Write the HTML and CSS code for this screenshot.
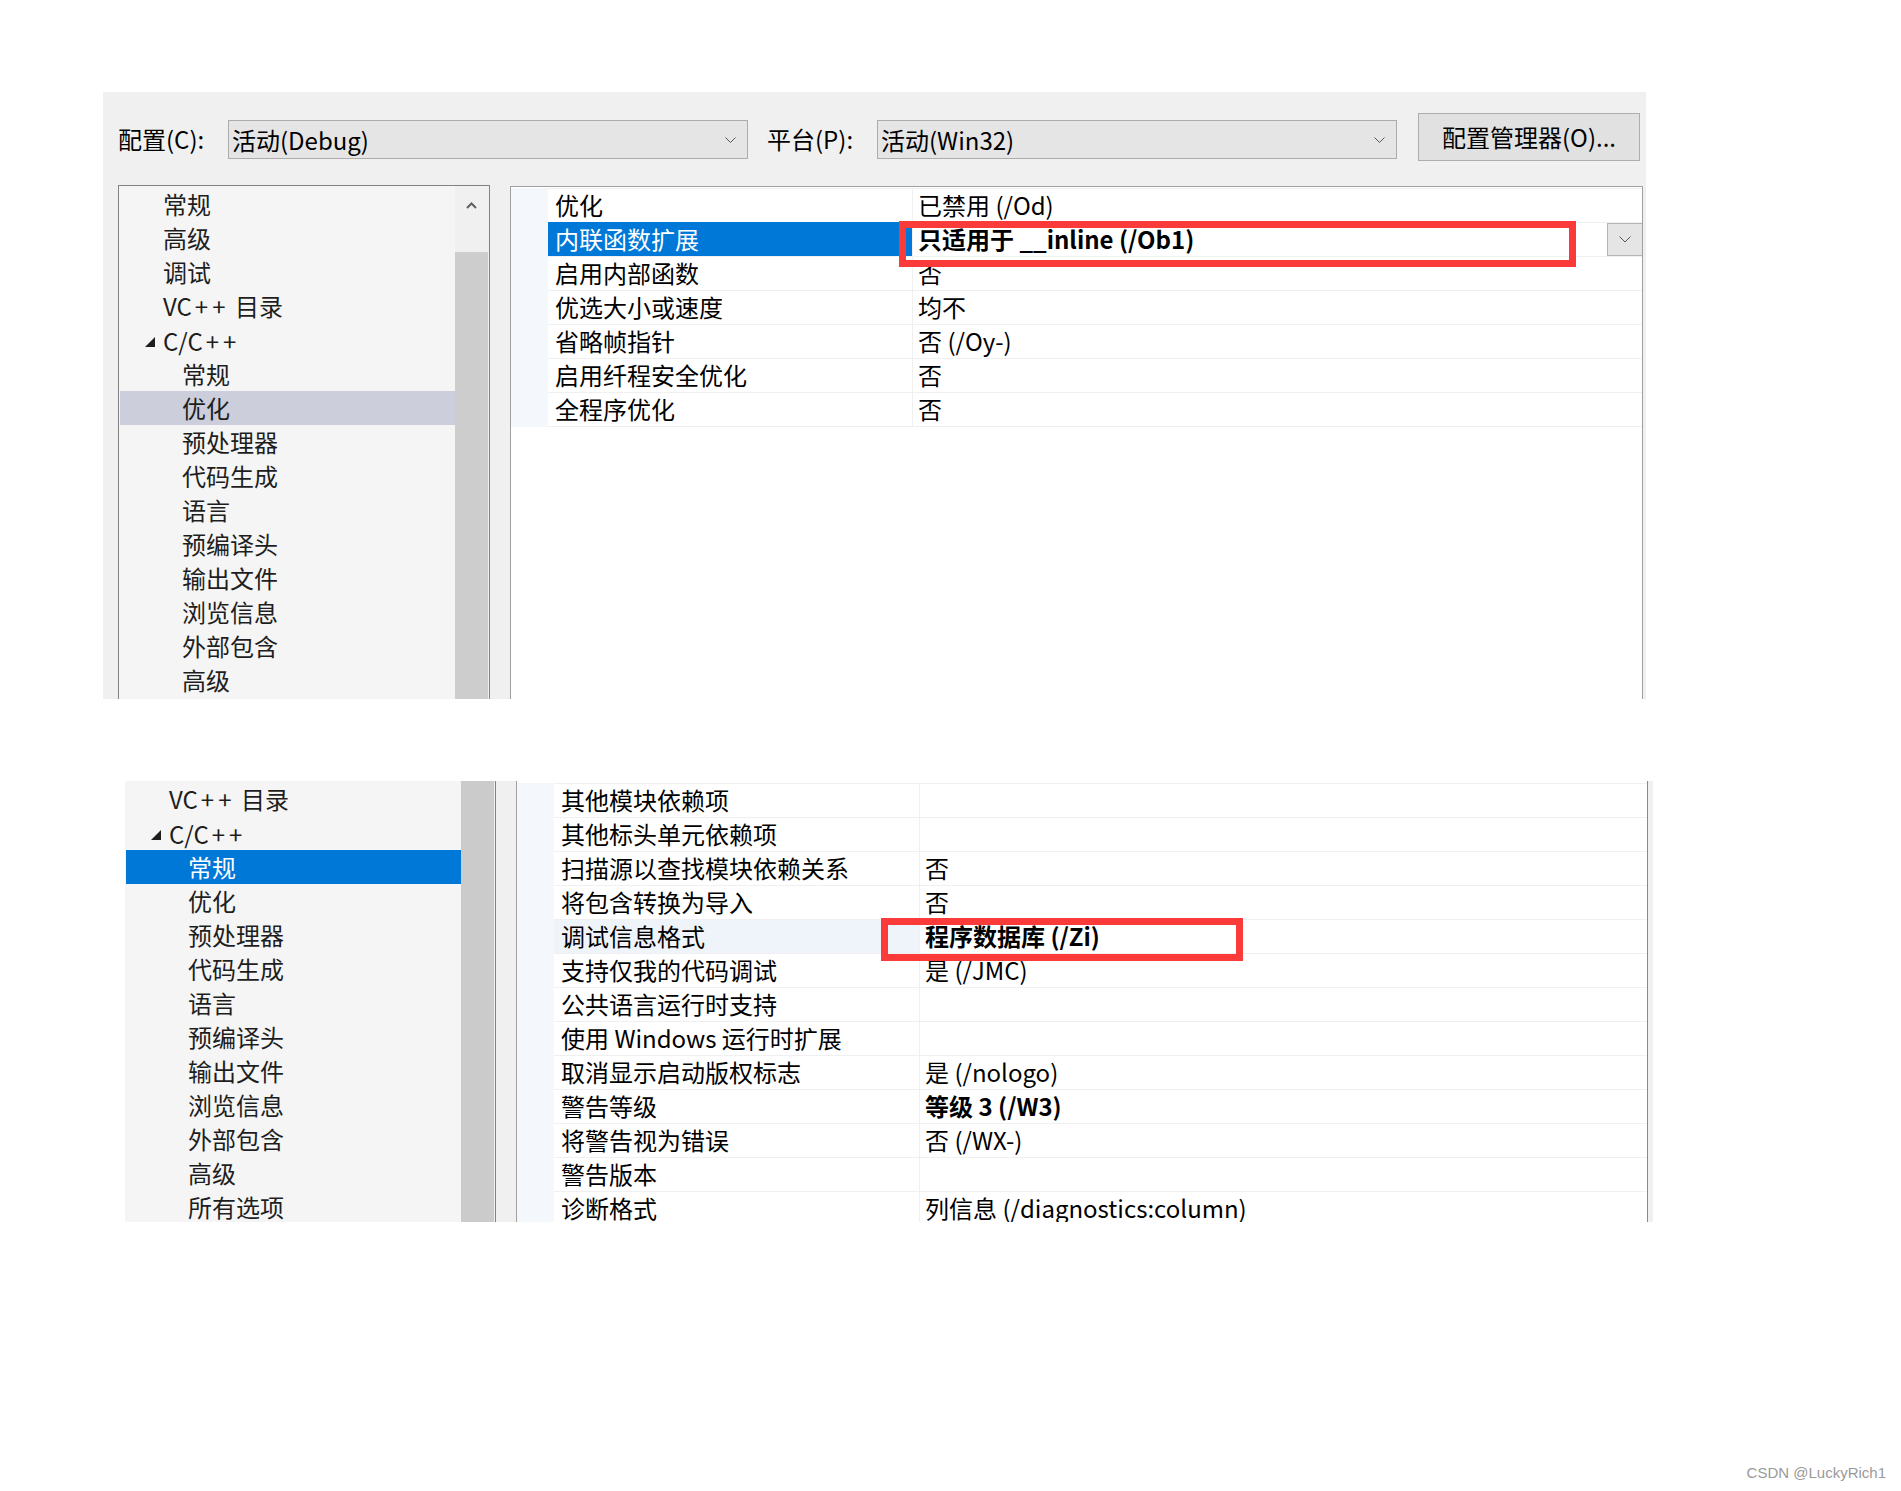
FILE: index.html
```html
<!DOCTYPE html>
<html lang="zh-CN">
<head>
<meta charset="utf-8">
<title>属性页</title>
<link rel="stylesheet" href="styles.css">
</head>
<body>
<div class="page">
  <section class="shot1">
    <div class="toolbar">
      <span class="lbl">配置(C):</span>
      <div class="combo"><span>活动(Debug)</span><svg class="chev" width="11" height="7" viewBox="0 0 11 7"><polyline points="0.5,0.5 5.5,5.5 10.5,0.5" fill="none" stroke="#555" stroke-width="1"/></svg></div>
      <span class="lbl lbl2">平台(P):</span>
      <div class="combo"><span>活动(Win32)</span><svg class="chev" width="11" height="7" viewBox="0 0 11 7"><polyline points="0.5,0.5 5.5,5.5 10.5,0.5" fill="none" stroke="#555" stroke-width="1"/></svg></div>
      <div class="btn">配置管理器(O)...</div>
    </div>
    <div class="main">
      <div class="tree">
        <div class="list">
          <div class="node">常规</div>
          <div class="node">高级</div>
          <div class="node">调试</div>
          <div class="node">VC<span class="pp">++</span> 目录</div>
          <div class="node exp"><svg class="tri" width="10" height="10" viewBox="0 0 10 10"><polygon points="10,0 10,10 0,10" fill="#1e1e1e"/></svg><span>C/C<span class="pp">++</span></span></div>
          <div class="node child">常规</div>
          <div class="node child inactive">优化</div>
          <div class="node child">预处理器</div>
          <div class="node child">代码生成</div>
          <div class="node child">语言</div>
          <div class="node child">预编译头</div>
          <div class="node child">输出文件</div>
          <div class="node child">浏览信息</div>
          <div class="node child">外部包含</div>
          <div class="node child">高级</div>
        </div>
        <div class="vscroll">
          <div class="up"><svg width="11" height="7" viewBox="0 0 11 7"><polyline points="1,6 5.5,1.5 10,6" fill="none" stroke="#606060" stroke-width="2"/></svg></div>
          <div class="thumb"></div>
        </div>
      </div>
      <div class="grid">
        <div class="row"><div class="gut"></div><div class="name">优化</div><div class="val">已禁用 (/Od)</div></div>
        <div class="row"><div class="gut"></div><div class="name active">内联函数扩展</div><div class="val"><b>只适用于 __inline (/Ob1)</b><span class="ddbtn"><svg width="12" height="7" viewBox="0 0 12 7"><polyline points="0.5,0.5 6,6 11.5,0.5" fill="none" stroke="#555" stroke-width="1"/></svg></span></div></div>
        <div class="row"><div class="gut"></div><div class="name">启用内部函数</div><div class="val">否</div></div>
        <div class="row"><div class="gut"></div><div class="name">优选大小或速度</div><div class="val">均不</div></div>
        <div class="row"><div class="gut"></div><div class="name">省略帧指针</div><div class="val">否 (/Oy-)</div></div>
        <div class="row"><div class="gut"></div><div class="name">启用纤程安全优化</div><div class="val">否</div></div>
        <div class="row last"><div class="gut"></div><div class="name">全程序优化</div><div class="val">否</div></div>
      </div>
    </div>
  </section>

  <section class="shot2">
    <div class="list list2">
      <div class="node">VC<span class="pp">++</span> 目录</div>
      <div class="node exp"><svg class="tri" width="10" height="10" viewBox="0 0 10 10"><polygon points="10,0 10,10 0,10" fill="#1e1e1e"/></svg><span>C/C<span class="pp">++</span></span></div>
      <div class="node child selected">常规</div>
      <div class="node child">优化</div>
      <div class="node child">预处理器</div>
      <div class="node child">代码生成</div>
      <div class="node child">语言</div>
      <div class="node child">预编译头</div>
      <div class="node child">输出文件</div>
      <div class="node child">浏览信息</div>
      <div class="node child">外部包含</div>
      <div class="node child">高级</div>
      <div class="node child">所有选项</div>
    </div>
    <div class="vscroll2"><div class="thumb2"></div></div>
    <div class="strip"></div>
    <div class="grid2">
      <div class="row r2"><div class="gut"></div><div class="name">其他模块依赖项</div><div class="val"></div></div>
      <div class="row r2"><div class="gut"></div><div class="name">其他标头单元依赖项</div><div class="val"></div></div>
      <div class="row r2"><div class="gut"></div><div class="name">扫描源以查找模块依赖关系</div><div class="val">否</div></div>
      <div class="row r2"><div class="gut"></div><div class="name">将包含转换为导入</div><div class="val">否</div></div>
      <div class="row r2"><div class="gut"></div><div class="name hover">调试信息格式</div><div class="val"><b>程序数据库 (/Zi)</b></div></div>
      <div class="row r2"><div class="gut"></div><div class="name">支持仅我的代码调试</div><div class="val">是 (/JMC)</div></div>
      <div class="row r2"><div class="gut"></div><div class="name">公共语言运行时支持</div><div class="val"></div></div>
      <div class="row r2"><div class="gut"></div><div class="name">使用 Windows 运行时扩展</div><div class="val"></div></div>
      <div class="row r2"><div class="gut"></div><div class="name">取消显示启动版权标志</div><div class="val">是 (/nologo)</div></div>
      <div class="row r2"><div class="gut"></div><div class="name">警告等级</div><div class="val"><b>等级 3 (/W3)</b></div></div>
      <div class="row r2"><div class="gut"></div><div class="name">将警告视为错误</div><div class="val">否 (/WX-)</div></div>
      <div class="row r2"><div class="gut"></div><div class="name">警告版本</div><div class="val"></div></div>
      <div class="row r2"><div class="gut"></div><div class="name">诊断格式</div><div class="val">列信息 (/diagnostics:column)</div></div>
    </div>
    <div class="strip2"></div>
  </section>

  <div class="wm">CSDN @LuckyRich1</div>

  <div class="mark mark1"></div>
  <div class="mark mark2"></div>
</div>
</body>
</html>
```

FILE: styles.css
```css
* { box-sizing: border-box; }
html, body { margin: 0; padding: 0; background: #fff; }
body {
  font-family: "Noto Sans CJK SC", "Noto Sans", sans-serif;
  font-size: 24px;
  color: #000;
}
.page { position: relative; width: 1901px; height: 1491px; overflow: hidden; }

/* ---------- first screenshot ---------- */
.shot1 {
  margin: 92px 0 0 103px;
  width: 1543px;
  height: 607px;
  background: #f0f0f0;
  padding-left: 15px;
  overflow: hidden;
}
.toolbar { display: flex; align-items: flex-start; padding-top: 21px; height: 93px; }
.lbl { width: 110px; height: 39px; margin-top: 7px; line-height: 38px; white-space: nowrap; }
.lbl2 { margin-left: 19px; }
.combo {
  width: 520px; height: 39px; margin-top: 7px;
  background: #e5e5e5; border: 1px solid #acacac;
  display: flex; align-items: center; justify-content: space-between;
  padding: 0 11px 0 3px; line-height: 37px;
}
.chev { display: block; margin-top: 2px; }
.btn {
  margin-left: 21px; width: 222px; height: 48px;
  background: #e1e1e1; border: 1px solid #adadad;
  text-align: center; line-height: 45px; white-space: nowrap;
}
.main { display: flex; align-items: flex-start; height: 514px; }

.tree {
  width: 372px; height: 514px;
  border: 1px solid #828282; border-bottom: 0;
  display: flex; background: #f5f5f5;
}
.list { width: 336px; padding: 1px 0 0 1px; flex: none; }
.node { height: 34px; line-height: 33px; padding-left: 43px; white-space: nowrap; color: #1e1e1e; }
.node.child { padding-left: 62px; }
.node.exp { padding-left: 25px; display: flex; align-items: center; }
.node.exp .tri { margin: 3px 8px 0 0; flex: none; }
.node.inactive { background: #cccedb; }
.node.selected { background: #0078d7; color: #fff; }
.pp { letter-spacing: 4px; margin-left: 3px; }

.vscroll { width: 34px; background: #f0f0f0; padding-right: 1px; display: flex; flex-direction: column; }
.up { height: 66px; display: flex; justify-content: center; padding-top: 16px; flex: none; }
.up svg { display: block; }
.thumb { flex: 1; background: #cdcdcd; }

.grid {
  margin-left: 20px; margin-top: 1px;
  width: 1133px; height: 513px;
  border: 1px solid #a0a0a0; border-bottom: 0;
  background: #fff; padding-top: 1px;
}
.row { display: grid; grid-template-columns: 37px 365px 1fr; height: 34px; }
.gut { background: #f4f7fc; }
.name {
  border-top: 1px solid #f0f0f0; border-right: 1px solid #f0f0f0;
  padding-left: 7px; line-height: 32px; white-space: nowrap;
}
.val {
  border-top: 1px solid #f0f0f0;
  padding-left: 5px; line-height: 32px; white-space: nowrap;
  display: flex; align-items: stretch;
}
.row.last { height: 35px; }
.row.last .name, .row.last .val { border-bottom: 1px solid #f0f0f0; }
.name.active { background: #0078d7; color: #fff; border-top-color: #0078d7; }
.val b { font-weight: 700; }
.ddbtn {
  margin-left: auto; width: 35px; height: 33px;
  background: #e5e5e5; border: 1px solid #b4b4b4; border-right: 0;
  display: flex; align-items: center; justify-content: center;
}
.ddbtn svg { display: block; }

/* ---------- second screenshot ---------- */
.shot2 {
  margin: 82px 0 0 125px;
  width: 1528px; height: 441px;
  display: flex; overflow: hidden;
}
.list2 { background: #f5f5f5; height: 441px; }
.vscroll2 { width: 35px; background: #f0f0f0; border-right: 1px solid #828282; padding-right: 1px; flex: none; }
.thumb2 { height: 100%; background: #cbcbcb; }
.strip { width: 20px; background: #f0f0f0; flex: none; }
.grid2 {
  width: 1132px; height: 441px; flex: none;
  border-left: 1px solid #a0a0a0; border-right: 1px solid #8a8a8a;
  background: #fff; padding-top: 2px;
}
.grid2 .gut { background: #f4f7fc; }
.row.r2 { grid-template-columns: 37px 366px 1fr; }
.name.hover { background: #eff3fa; }
.strip2 { width: 6px; background: #f0f0f0; flex: none; }

/* ---------- watermark ---------- */
.wm {
  margin-top: 241px;
  padding-right: 15px;
  text-align: right;
  font-family: "Liberation Sans", Arial, sans-serif;
  font-size: 15px; line-height: 20px;
  color: #9a9a9a;
}

/* ---------- annotation boxes ---------- */
.mark { position: absolute; border: 7px solid #fb3a3a; }
.mark1 { left: 899px; top: 221px; width: 677px; height: 46px; }
.mark2 { left: 881px; top: 918px; width: 362px; height: 43px; }
```
